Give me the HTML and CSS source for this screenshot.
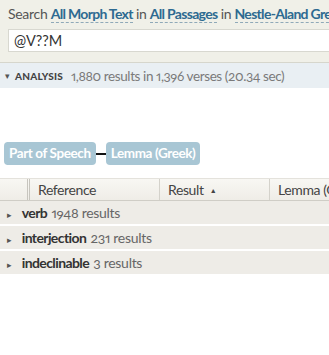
FILE: index.html
```html
<!DOCTYPE html>
<html lang="en">
<head>
    <meta charset="UTF-8">
    <title>Search</title>
    <link rel="stylesheet" href="styles.css">
</head>
<body>
    <div class="search-panel">
        <div class="search-line">
            Search <span class="pick">All Morph Text</span> in <span class="pick">All Passages</span> in <span class="pick">Nestle-Aland Greek New Testament</span>
        </div>
        <input class="query" type="text" value="@V??M">
    </div>
    <div class="analysis-bar">
        <span class="caret">&#9662;</span>
        <span class="analysis-label">ANALYSIS</span>
        <span class="analysis-stats">1,880 results in 1,396 verses (20.34 sec)</span>
    </div>
    <div class="analysis-body">
        <div class="chain">
            <span class="chip">Part of Speech</span>
            <span class="link-line"></span>
            <span class="chip">Lemma (Greek)</span>
        </div>
        <div class="grid">
            <div class="grid-head">
                <div class="col col-toggle"></div>
                <div class="col col-ref">Reference</div>
                <div class="col col-result">Result <span class="sort">&#9650;</span></div>
                <div class="col col-lemma">Lemma (Greek)</div>
            </div>
            <div class="group"><span class="arrow">&#9656;</span><b>verb</b> 1948 results</div>
            <div class="group"><span class="arrow">&#9656;</span><b>interjection</b> 231 results</div>
            <div class="group"><span class="arrow">&#9656;</span><b>indeclinable</b> 3 results</div>
        </div>
    </div>
</body>
</html>
```

FILE: styles.css
```css
body {
    font-family: Lato, "Open Sans", sans-serif;
    font-feature-settings: "onum", "pnum";
    margin: 0;
    padding: 0;
    background-color: #fff;
    color: #333;
    overflow: hidden;
}
.search-panel {
    background-color: #f0f0e8;
    padding: 4px 0 10px 8px;
    border-bottom: 1px solid #d6d6cc;
    overflow: hidden;
}
.search-line {
    font-size: 14px;
    letter-spacing: -0.3px;
    color: #555;
    white-space: nowrap;
    height: 22px;
    line-height: 20px;
}
.pick {
    color: #2d6a91;
    font-weight: 700;
    letter-spacing: -0.7px;
    border-bottom: 1px dashed #8fa9b8;
}
.query {
    display: block;
    box-sizing: border-box;
    width: 330px;
    height: 23px;
    margin-top: 3px;
    border: 1px solid #d8d8d0;
    padding: 0 5px;
    font-family: Lato, sans-serif;
    font-size: 14.5px;
    color: #333;
    background: #fff;
}
.analysis-bar {
    background-color: #e9eff3;
    height: 25px;
    display: flex;
    align-items: center;
    padding-left: 5px;
    font-size: 13.5px;
    white-space: nowrap;
}
.caret {
    font-size: 9px;
    color: #555;
    margin-right: 5px;
}
.analysis-label {
    font-weight: 900;
    font-size: 10px;
    color: #444;
    letter-spacing: 0.2px;
    margin-right: 8px;
}
.analysis-stats {
    color: #7a7a7a;
    letter-spacing: -0.4px;
}
.analysis-body {
    padding-top: 54px;
}
.chain {
    display: flex;
    align-items: center;
    padding-left: 4px;
}
.chip {
    background-color: #a8c6d4;
    color: #fff;
    font-weight: 700;
    font-size: 13.5px;
    letter-spacing: -0.4px;
    padding: 2px 5px;
    border-radius: 4px;
    height: 19px;
    line-height: 19px;
}
.link-line {
    width: 10px;
    height: 2px;
    background-color: #111;
}
.grid {
    margin-top: 13px;
}
.grid-head {
    display: flex;
    height: 21px;
    background: linear-gradient(#f8f7f3, #efede7);
    border-top: 1px solid #e4e2dc;
    border-bottom: 1px solid #cfcdc6;
    font-size: 14px;
    letter-spacing: -0.4px;
    color: #444;
    white-space: nowrap;
}
.col {
    box-sizing: border-box;
    line-height: 21px;
    padding-left: 8px;
    border-right: 1px solid #d4d2cb;
    overflow: hidden;
}
.col-toggle {
    width: 30px;
    border-right: 3px double #c7c5be;
}
.col-ref {
    width: 130px;
}
.col-result {
    width: 110px;
}
.col-lemma {
    flex: 1;
    border-right: none;
}
.sort {
    font-size: 7px;
    vertical-align: 2px;
    margin-left: 3px;
}
.group {
    background-color: #eeece7;
    height: 23px;
    line-height: 23px;
    border-bottom: 2px solid #fff;
    font-size: 14px;
    letter-spacing: -0.3px;
    color: #666;
    padding-left: 7px;
    white-space: nowrap;
}
.group b {
    color: #333;
    font-weight: 700;
    letter-spacing: -0.6px;
    margin-right: 1px;
}
.arrow {
    font-size: 9px;
    color: #555;
    margin-right: 10px;
}
```
